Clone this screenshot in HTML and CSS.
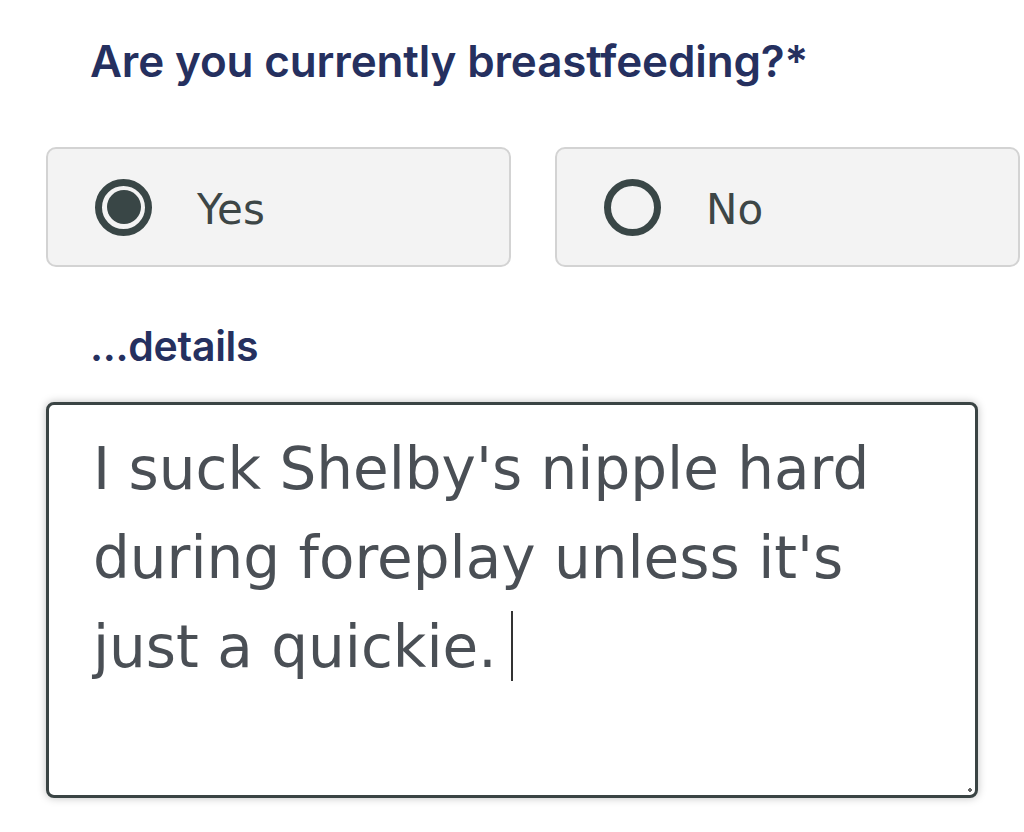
FILE: index.html
```html
<!DOCTYPE html>
<html>
<head>
<meta charset="utf-8">
<link rel="stylesheet" href="styles.css">
</head>
<body>
<div class="form">
  <h1 class="question">Are you currently breastfeeding?*</h1>
  <div class="options">
    <label class="option">
      <span class="radio checked"><span class="dot"></span></span>
      <span class="opt-label">Yes</span>
    </label>
    <label class="option">
      <span class="radio"></span>
      <span class="opt-label">No</span>
    </label>
  </div>
  <div class="details-label">...details</div>
  <div class="textarea">
    <div class="text">I suck Shelby's nipple hard during foreplay unless it's just a quickie.<span class="caret"></span></div>
    <span class="grip"></span>
  </div>
</div>
</body>
</html>
```
FILE: styles.css
```css
html, body {
  margin: 0;
  padding: 0;
  background: #ffffff;
}
.form {
  width: 1024px;
  height: 832px;
  padding: 0 0 0 46px;
  box-sizing: border-box;
  font-family: "DejaVu Sans", sans-serif;
}
.question {
  margin: 0;
  padding: 33px 0 0 44px;
  font-family: "Inter", sans-serif;
  font-size: 44px;
  font-weight: 600;
  color: #25305f;
  line-height: 56px;
  letter-spacing: -0.15px;
}
.options {
  display: flex;
  gap: 44px;
  margin-top: 58px;
}
.option {
  width: 465px;
  height: 120px;
  box-sizing: border-box;
  border: 2px solid #d3d3d3;
  border-radius: 10px;
  background: #f3f3f3;
  display: flex;
  align-items: center;
  padding-left: 47px;
}
.radio {
  width: 57px;
  height: 57px;
  box-sizing: border-box;
  border: 7px solid #394646;
  border-radius: 50%;
  display: flex;
  align-items: center;
  justify-content: center;
}
.dot {
  width: 34px;
  height: 34px;
  border-radius: 50%;
  background: #394646;
}
.opt-label {
  margin-left: 45px;
  padding-top: 5px;
  font-size: 42px;
  color: #3d4646;
}
.details-label {
  margin: 55px 0 0 44px;
  font-family: "Inter", sans-serif;
  font-size: 41px;
  font-weight: 600;
  color: #25305f;
  line-height: 48px;
  letter-spacing: -0.3px;
}
.textarea {
  position: relative;
  margin-top: 32px;
  width: 932px;
  height: 396px;
  box-sizing: border-box;
  border: 3px solid #3a4444;
  border-radius: 8px;
  background: #ffffff;
  box-shadow: 0 0 8px rgba(0, 0, 0, 0.25);
  padding: 20px 44px;
}
.text {
  font-size: 58px;
  line-height: 89px;
  color: #4a4f55;
}
.caret {
  display: inline-block;
  width: 2px;
  height: 70px;
  background: #333;
  vertical-align: -14px;
  margin-left: 14px;
}
.grip {
  position: absolute;
  right: 2px;
  bottom: 2px;
  width: 6px;
  height: 6px;
  background: radial-gradient(circle, #666 40%, transparent 45%);
}
```
